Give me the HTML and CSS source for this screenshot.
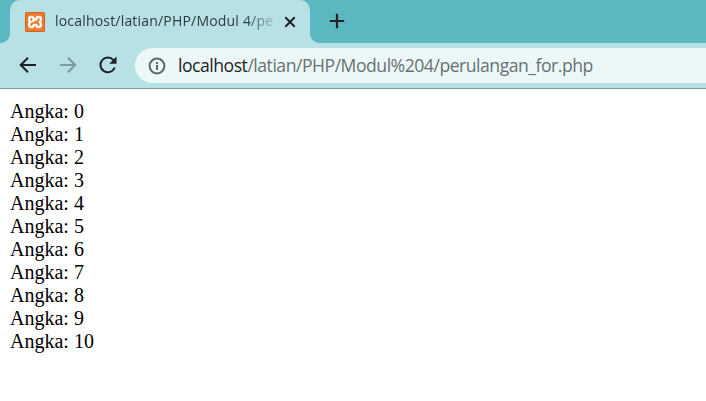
FILE: index.html
```html
<!DOCTYPE html>
<html lang="id">
<head>
<meta charset="utf-8">
<title>localhost/latian/PHP/Modul 4/perulangan_for.php</title>
<link rel="stylesheet" href="styles.css">
</head>
<body>
<header class="browser">
  <div class="tabs">
    <div class="tab">
      <svg class="favicon" width="20" height="20" viewBox="0 0 20 20">
        <rect width="20" height="20" rx="1.5" fill="#cf6424"/>
        <rect x="1" y="1" width="18" height="18" rx="1" fill="#ee7a2c"/>
        <path d="M8.600 6.800Q8.400 4.900 6.400 4.900 4.100 4.900 4.100 7.200 4.100 9.300 5.500 10 4.100 10.800 4.100 12.800 4.100 15.100 6.300 15.100 8.600 15.100 8.600 12.900H11.400Q11.400 15.100 13.700 15.100 15.900 15.100 15.900 12.800 15.900 10.800 14.500 10 15.900 9.300 15.900 7.200 15.900 4.900 13.600 4.900 11.600 4.900 11.400 6.800M7.500 9.200Q8.600 9.200 8.600 7.500H11.400" fill="none" stroke="#fff" stroke-width="2.300" stroke-linecap="round" stroke-linejoin="round"/>
      </svg>
      <span class="title">localhost/latian/PHP/Modul 4/pe</span>
      <svg class="close" width="12" height="12" viewBox="0 0 12 12"><path d="M1.300 1.300l9.400 9.400M10.700 1.300l-9.400 9.400"/></svg>
    </div>
    <svg class="plus" width="16" height="16" viewBox="0 0 16 16"><path d="M8 .8v14.400M.8 8h14.400"/></svg>
  </div>
  <div class="toolbar">
    <svg class="nav" width="18" height="18" viewBox="0 0 18 18"><path d="M17 9H2M9 1.700L1.700 9l7.300 7.300"/></svg>
    <svg class="nav forward" width="18" height="18" viewBox="0 0 18 18"><path d="M1 9h15M9 1.700L16.300 9 9 16.300"/></svg>
    <svg class="nav reload" width="20" height="20" viewBox="0 0 20 20"><path d="M16.700 12.600A7.400 7.400 0 1 1 15.500 5.100"/><path class="head" d="M18.500 1.500v7.200h-7.200z"/></svg>
    <div class="address">
      <svg class="info" width="18" height="18" viewBox="0 0 18 18"><circle cx="9" cy="9" r="7.400"/><path d="M9 8v5M9 5v2"/></svg>
      <span class="url"><span class="host">localhost</span><span class="path">/latian/PHP/Modul%204/perulangan_for.php</span></span>
    </div>
  </div>
</header>
<main>
  <div>Angka: 0</div>
  <div>Angka: 1</div>
  <div>Angka: 2</div>
  <div>Angka: 3</div>
  <div>Angka: 4</div>
  <div>Angka: 5</div>
  <div>Angka: 6</div>
  <div>Angka: 7</div>
  <div>Angka: 8</div>
  <div>Angka: 9</div>
  <div>Angka: 10</div>
</main>
</body>
</html>
```
FILE: styles.css
```css
* { box-sizing: border-box; }
body { margin: 0; background: #fff; overflow: hidden; }
svg { display: block; flex: none; fill: none; }
.browser { font-family: "Open Sans", "Noto Sans", sans-serif; }
.tabs {
  display: flex;
  height: 43px;
  padding-left: 10px;
  background: #5bb8c1;
}
.tab {
  position: relative;
  display: flex;
  align-items: center;
  width: 300px;
  padding: 0 14px 0 15px;
  background: #b7e1e4;
  border-radius: 10px 10px 0 0;
}
.tab::before, .tab::after {
  content: "";
  position: absolute;
  bottom: 0;
  width: 10px;
  height: 10px;
}
.tab::before { left: -10px; background: radial-gradient(circle at 0 0, transparent 9.5px, #b7e1e4 10.5px); }
.tab::after { right: -10px; background: radial-gradient(circle at 100% 0, transparent 9.5px, #b7e1e4 10.5px); }
.title {
  width: 219px;
  margin: -2px 0 0 10px;
  white-space: nowrap;
  font-size: 14px;
  line-height: 20px;
  letter-spacing: 0.19px;
  color: #2c3b3e;
  -webkit-mask-image: linear-gradient(to right, #000 190px, transparent 225px);
  mask-image: linear-gradient(to right, #000 190px, transparent 225px);
}
.close { margin-left: 10px; stroke: #202124; stroke-width: 2; }
.plus { margin: 13px 0 0 19px; stroke: #202124; stroke-width: 2.2; }
.toolbar {
  display: flex;
  align-items: center;
  height: 46px;
  padding-left: 19px;
  background: #b7e1e4;
  border-bottom: 1px solid #7d9da0;
}
.nav { margin-top: -2px; stroke: #202124; stroke-width: 2; }
.forward { margin-left: 22px; stroke: #7f9a9d; }
.reload { margin-left: 21px; }
.head { fill: #202124; stroke: none; }
.address {
  display: flex;
  align-items: center;
  flex: 1;
  height: 35px;
  margin-left: 17px;
  padding-left: 14px;
  background: #ecf8f8;
  border-radius: 18px 0 0 18px;
}
.info { margin-left: -1px; stroke: #5f6769; stroke-width: 2; }
.url { margin: -1px 0 0 12px; white-space: nowrap; font-size: 17.6px; line-height: 26px; letter-spacing: -0.48px; }
.host { color: #202124; }
.path { color: #687172; }
main {
  padding: 11px 10px;
  font-family: "Liberation Serif", serif;
  font-size: 20px;
  line-height: 23px;
  color: #000;
}
```
